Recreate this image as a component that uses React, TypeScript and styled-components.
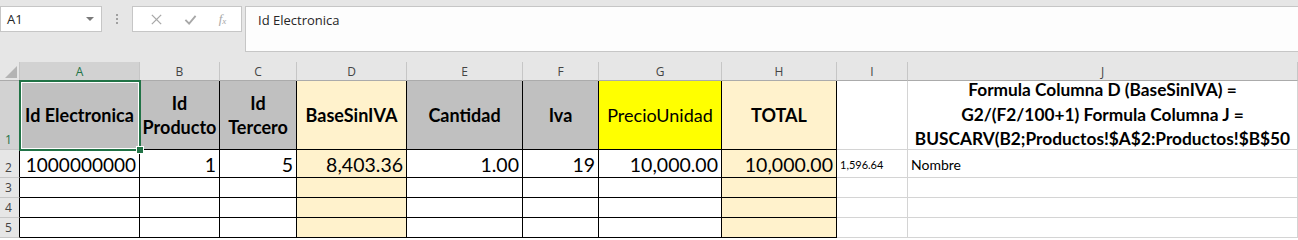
import React from 'react'
import styled, { createGlobalStyle } from 'styled-components'

const GREEN = '#217346'
const GRID = '#d4d4d4'
const CREAM = '#fff2cc'
const GREY = '#c0c0c0'

const GlobalStyle = createGlobalStyle`
  html, body {
    margin: 0;
    padding: 0;
    background: #fff;
  }
  body {
    width: 1298px;
    height: 240px;
    overflow: hidden;
    font-family: Lato, 'Liberation Sans', sans-serif;
  }
`

type Align = 'left' | 'right' | 'center'

type CellSpec = {
  text?: React.ReactNode
  bg?: string
  align?: Align
  bold?: boolean
  size?: number
}

const widths = [20, 120, 80, 77, 110, 116, 76, 123, 115, 71]
const letters = ['A', 'B', 'C', 'D', 'E', 'F', 'G', 'H', 'I', 'J']
const rowHeights = [69, 28, 20, 20, 20]

const bodyFill = (col: number) => (col === 3 || col === 7 ? CREAM : '#fff')

const header: CellSpec[] = [
  { text: 'Id Electronica', bg: GREY, bold: true, align: 'center' },
  { text: 'Id Producto', bg: GREY, bold: true, align: 'center' },
  { text: 'Id Tercero', bg: GREY, bold: true, align: 'center' },
  { text: 'BaseSinIVA', bg: CREAM, bold: true, align: 'center' },
  { text: 'Cantidad', bg: GREY, bold: true, align: 'center' },
  { text: 'Iva', bg: GREY, bold: true, align: 'center' },
  { text: 'PrecioUnidad', bg: '#ffff00', align: 'center' },
  { text: 'TOTAL', bg: CREAM, bold: true, align: 'center' },
  {},
  {
    text: (
      <>
        Formula Columna D (BaseSinIVA) =<br />
        G2/(F2/100+1) Formula Columna J =<br />
        BUSCARV(B2;Productos!$A$2:Productos!$B$50
      </>
    ),
    bold: true,
    align: 'center',
    size: 17.3,
  },
]

const values: CellSpec[] = [
  { text: '1000000000', align: 'right', size: 19 },
  { text: '1', align: 'right', size: 19.5 },
  { text: '5', align: 'right', size: 19.5 },
  { text: '8,403.36', align: 'right', size: 19.5 },
  { text: '1.00', align: 'right', size: 19.5 },
  { text: '19', align: 'right', size: 19.5 },
  { text: '10,000.00', align: 'right', size: 19.5 },
  { text: '10,000.00', align: 'right', size: 19.5 },
  { text: '1,596.64', align: 'left', size: 11 },
  { text: 'Nombre', align: 'left', size: 14 },
]

const rows: CellSpec[][] = [header, values, [], [], []]

export default function App() {
  return (
    <>
      <GlobalStyle />
      <FormulaBar>
        <NameBox>
          <span>A1</span>
          <Caret />
        </NameBox>
        <Grip>
          <i />
          <i />
          <i />
        </Grip>
        <ActionGroup>
          <ActionIcon viewBox="0 0 14 14">
            <path d="M2 2 L12 12 M12 2 L2 12" stroke="#a8a8a8" strokeWidth="1.4" fill="none" />
          </ActionIcon>
          <ActionIcon viewBox="0 0 14 14">
            <path d="M1.5 7.5 L5.5 11.5 L12.5 3" stroke="#a8a8a8" strokeWidth="2" fill="none" />
          </ActionIcon>
          <Fx>
            f<sub>x</sub>
          </Fx>
        </ActionGroup>
        <FormulaInput>Id Electronica</FormulaInput>
      </FormulaBar>
      <Sheet>
        <Corner>
          <svg width="20" height="19" viewBox="0 0 20 19">
            <polygon points="5,16 17,16 17,4" fill="#b4b4b4" />
          </svg>
        </Corner>
        {letters.map((l, i) => (
          <ColHead key={l} $selected={i === 0}>
            {l}
          </ColHead>
        ))}
        {rows.map((cells, r) => (
          <React.Fragment key={r}>
            <RowHead $selected={r === 0}>{r + 1}</RowHead>
            {letters.map((_, c) => {
              const spec = cells[c] || {}
              return (
                <Cell
                  key={c}
                  $bg={spec.bg || (c < 8 ? bodyFill(c) : '#fff')}
                  $align={spec.align || 'left'}
                  $bold={!!spec.bold}
                  $size={spec.size || 18}
                  $boxed={c < 8}
                  $tall={r === 0}
                >
                  <CellText>{spec.text}</CellText>
                </Cell>
              )
            })}
          </React.Fragment>
        ))}
        <Selection>
          <Handle />
        </Selection>
      </Sheet>
    </>
  )
}

const FormulaBar = styled.div`
  display: flex;
  align-items: flex-start;
  height: 62px;
  padding-top: 6px;
  box-sizing: border-box;
  background: #e6e6e6;
  font-family: 'Open Sans', 'Noto Sans', sans-serif;
  font-size: 13px;
  color: #262626;
`

const NameBox = styled.div`
  width: 102px;
  height: 26px;
  box-sizing: border-box;
  display: flex;
  align-items: center;
  justify-content: space-between;
  padding: 0 7px 0 6px;
  background: #fff;
  border: 1px solid #c6c6c6;
`

const Caret = styled.span`
  width: 0;
  height: 0;
  border-left: 4px solid transparent;
  border-right: 4px solid transparent;
  border-top: 4px solid #7a7a7a;
`

const Grip = styled.div`
  width: 30px;
  height: 26px;
  display: flex;
  flex-direction: column;
  align-items: center;
  justify-content: center;
  gap: 2px;

  i {
    width: 2px;
    height: 2px;
    background: #a0a0a0;
  }
`

const ActionGroup = styled.div`
  width: 110px;
  height: 26px;
  box-sizing: border-box;
  display: flex;
  align-items: center;
  justify-content: space-around;
  padding: 0 4px 0 6px;
  background: #fff;
  border: 1px solid #c6c6c6;
`

const ActionIcon = styled.svg`
  width: 13px;
  height: 13px;
`

const Fx = styled.span`
  font-family: 'Liberation Serif', serif;
  font-style: italic;
  font-size: 13px;
  color: #a8a8a8;

  sub {
    font-size: 9px;
    vertical-align: -1px;
  }
`

const FormulaInput = styled.div`
  flex: 1;
  height: 46px;
  margin-left: 3px;
  box-sizing: border-box;
  padding: 4px 0 0 12px;
  line-height: 18px;
  background: #fdfdfd;
  border: 1px solid #c6c6c6;
  border-right: none;
`

const Sheet = styled.div`
  position: relative;
  display: grid;
  grid-template-columns: ${widths.map((w) => `${w}px`).join(' ')} 1fr;
  grid-template-rows: 19px ${rowHeights.map((h) => `${h}px`).join(' ')};
  background: #fff;
`

const Corner = styled.div`
  background: #e6e6e6;
  border-right: 1px solid #c6c6c6;
  border-bottom: 1px solid #ababab;
  box-sizing: border-box;

  svg {
    display: block;
  }
`

const ColHead = styled.div<{ $selected: boolean }>`
  box-sizing: border-box;
  display: flex;
  align-items: center;
  justify-content: center;
  font-family: 'Open Sans', 'Noto Sans', sans-serif;
  font-size: 12px;
  color: ${(p) => (p.$selected ? GREEN : '#444')};
  background: ${(p) => (p.$selected ? '#d2d2d2' : '#e6e6e6')};
  border-right: 1px solid #c6c6c6;
  border-bottom: 1px solid ${(p) => (p.$selected ? GREEN : '#ababab')};
`

const RowHead = styled.div<{ $selected: boolean }>`
  box-sizing: border-box;
  display: flex;
  align-items: flex-end;
  padding: 0 0 1px 5px;
  font-family: 'Open Sans', 'Noto Sans', sans-serif;
  font-size: 12px;
  color: ${(p) => (p.$selected ? GREEN : '#444')};
  background: ${(p) => (p.$selected ? '#d2d2d2' : '#e6e6e6')};
  border-right: 1px solid #000;
  border-bottom: 1px solid #c6c6c6;
`

const Cell = styled.div<{
  $bg: string
  $align: Align
  $bold: boolean
  $size: number
  $boxed: boolean
  $tall: boolean
}>`
  box-sizing: border-box;
  display: flex;
  align-items: ${(p) => (p.$tall ? 'center' : 'flex-end')};
  justify-content: ${(p) =>
    p.$align === 'center' ? 'center' : p.$align === 'right' ? 'flex-end' : 'flex-start'};
  padding: 0 3px;
  background: ${(p) => p.$bg};
  border-right: 1px solid ${(p) => (p.$boxed ? '#000' : GRID)};
  border-bottom: 1px solid ${(p) => (p.$boxed ? '#000' : GRID)};
  color: #000;
  font-weight: ${(p) => (p.$bold ? 700 : 400)};
  font-size: ${(p) => p.$size}px;
  line-height: ${(p) => (p.$tall ? '24.5px' : '24px')};
  text-align: ${(p) => p.$align};
  white-space: nowrap;
`

const CellText = styled.span`
  white-space: normal;
`

const Selection = styled.div`
  position: absolute;
  left: 19px;
  top: 18px;
  width: 122px;
  height: 71px;
  box-sizing: border-box;
  border: 2px solid ${GREEN};
  box-shadow: inset 0 0 0 1px #fff;
  pointer-events: none;
`

const Handle = styled.div`
  position: absolute;
  right: -5px;
  bottom: -5px;
  width: 6px;
  height: 6px;
  background: ${GREEN};
  border: 1px solid #fff;
`
